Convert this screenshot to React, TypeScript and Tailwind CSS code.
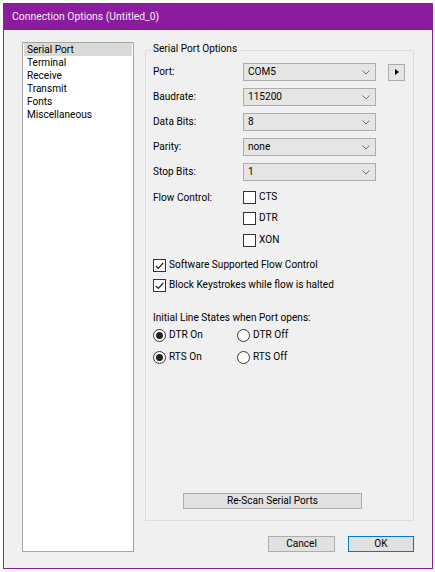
import React from "react";

const font = { fontFamily: 'Roboto, "Noto Sans", Arial, sans-serif' };

function Chevron() {
  return (
    <svg width="8" height="5" viewBox="0 0 8 5" className="shrink-0">
      <path d="M0.5 0.5 L4 4 L7.5 0.5" fill="none" stroke="#707070" strokeWidth="1" />
    </svg>
  );
}

function Combo({ value }: { value: string }) {
  return (
    <div className="flex h-[18px] w-[133px] items-center justify-between border border-[#adadad] bg-[#e5e5e5] pl-[4px] pr-[5px]">
      <span className="text-[10.1px] leading-none text-black">{value}</span>
      <Chevron />
    </div>
  );
}

function Row({ label, value, extra }: { label: string; value: string; extra?: boolean }) {
  return (
    <div className="flex h-[18px] items-center">
      <span className="w-[90px] text-[10.1px] leading-none text-black">{label}</span>
      <Combo value={value} />
      {extra && (
        <div className="ml-[12px] flex h-[17px] w-[17px] items-center justify-center border border-[#adadad] bg-[#e5e5e5]">
          <svg width="4" height="6" viewBox="0 0 4 6">
            <path d="M0 0 L4 3 L0 6 Z" fill="#000" />
          </svg>
        </div>
      )}
    </div>
  );
}

function Check({ label, checked }: { label: string; checked?: boolean }) {
  return (
    <div className="flex h-[13px] items-center gap-[3px]">
      <div className="flex h-[13px] w-[13px] items-center justify-center border border-[#333333] bg-white">
        {checked && (
          <svg width="9" height="8" viewBox="0 0 9 8">
            <path d="M0.8 4 L3.3 6.5 L8.2 1" fill="none" stroke="#222" strokeWidth="1.2" />
          </svg>
        )}
      </div>
      <span className="text-[10.1px] leading-none text-black">{label}</span>
    </div>
  );
}

function Radio({ label, checked }: { label: string; checked?: boolean }) {
  return (
    <div className="flex h-[13px] items-center gap-[3px]">
      <div className="flex h-[13px] w-[13px] items-center justify-center rounded-full border border-[#333333] bg-white">
        {checked && <div className="h-[7px] w-[7px] rounded-full bg-[#222]" />}
      </div>
      <span className="text-[10.1px] leading-none text-black">{label}</span>
    </div>
  );
}

export default function App() {
  const items = ["Serial Port", "Terminal", "Receive", "Transmit", "Fonts", "Miscellaneous"];
  return (
    <div className="h-[572px] w-[435px] bg-white pt-[3px] pl-[3px] pr-[2px] pb-[3px]" style={font}>
      <div className="flex h-full flex-col border border-t-0 border-[#8b1c9e] bg-[#f0f0f0]">
        <div className="flex h-[27px] items-center bg-[#8b1c9e] pl-[8px] text-[10.4px] text-[#f6e9f8]">
          Connection Options (Untitled_0)
        </div>
        <div className="flex pl-[18px] pt-[12px]">
          <div className="h-[510px] w-[112px] border border-[#a5a5a5] bg-white px-px">
            {items.map((it, i) => (
              <div
                key={it}
                className={`h-[13px] pl-[3px] text-[10.1px] leading-[13px] text-black ${i === 0 ? "bg-[#d9d9d9]" : ""}`}
              >
                {it}
              </div>
            ))}
          </div>
          <div className="ml-[11px] flex flex-col">
            <div className="relative mt-[8px] flex h-[471px] w-[269px] flex-col border border-[#dcdcdc] pl-[7px] pt-[12px]">
              <span className="absolute -top-[9px] left-[5px] bg-[#f0f0f0] px-[2px] text-[10.1px] leading-[14px] text-black">
                Serial Port Options
              </span>
              <div className="flex flex-col gap-[7px]">
                <Row label="Port:" value="COM5" extra />
                <Row label="Baudrate:" value="115200" />
                <Row label="Data Bits:" value="8" />
                <Row label="Parity:" value="none" />
                <Row label="Stop Bits:" value="1" />
              </div>
              <div className="mt-[10px] flex">
                <span className="w-[90px] text-[10.1px] leading-[13px] text-black">Flow Control:</span>
                <div className="flex flex-col">
                  <Check label="CTS" />
                  <div className="mt-[8px]">
                    <Check label="DTR" />
                  </div>
                  <div className="mt-[9px]">
                    <Check label="XON" />
                  </div>
                </div>
              </div>
              <div className="mt-[12px] flex flex-col gap-[7px]">
                <Check label="Software Supported Flow Control" checked />
                <Check label="Block Keystrokes while flow is halted" checked />
              </div>
              <div className="mt-[19px] text-[10.1px] leading-[13px] text-black">Initial Line States when Port opens:</div>
              <div className="mt-[5px] grid w-[170px] grid-cols-[84px_1fr] gap-y-[9px]">
                <Radio label="DTR On" checked />
                <Radio label="DTR Off" />
                <Radio label="RTS On" checked />
                <Radio label="RTS Off" />
              </div>
              <div className="mt-auto mb-[11px] ml-[30px] flex h-[16px] w-[179px] items-center justify-center border border-[#adadad] bg-[#e1e1e1] text-[10.1px] leading-none text-black">
                Re-Scan Serial Ports
              </div>
            </div>
            <div className="mt-[15px] flex justify-end gap-[13px]">
              <div className="flex h-[16px] w-[67px] items-center justify-center border border-[#adadad] bg-[#e1e1e1] text-[10.1px] leading-none text-black">
                Cancel
              </div>
              <div className="flex h-[16px] w-[66px] items-center justify-center border border-[#0078d7] bg-[#e1e1e1] text-[10.1px] leading-none text-black">
                OK
              </div>
            </div>
          </div>
        </div>
      </div>
    </div>
  );
}
